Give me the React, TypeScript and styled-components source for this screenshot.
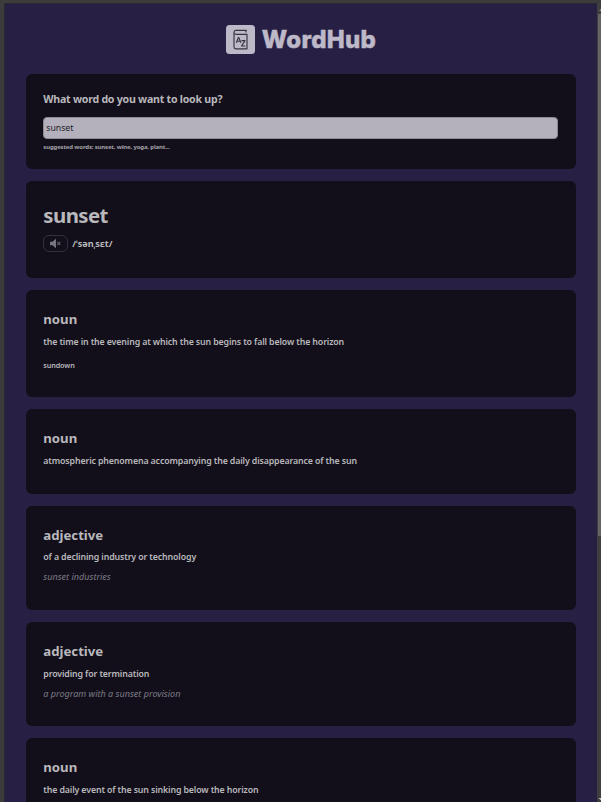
import React from "react";
import styled, { createGlobalStyle } from "styled-components";

const GlobalStyle = createGlobalStyle`
  * { box-sizing: border-box; }
  html, body { margin: 0; padding: 0; background: #3c3c3c; overflow: hidden; }
  body { font-family: "Noto Sans", "Open Sans", sans-serif; color: #b9b8bc; }
  h1, h2, p { margin: 0; }
`;

const Window = styled.div`
  display: grid;
  grid-template-columns: 1fr 4px;
  width: 601px;
  height: 802px;
  padding: 3px 0 0 4px;
  overflow: hidden;
  background: #3c3c3c;
`;

const Page = styled.main`
  display: flex;
  flex-direction: column;
  gap: 12px;
  height: 799px;
  padding: 0 21px 0 21px;
  border-left: 1px solid #2b2834;
  border-top: 1px solid #2b2834;
  overflow: hidden;
  background: #281f44;
`;

const ScrollTrack = styled.div`
  display: flex;
  flex-direction: column;
  align-items: flex-end;
  height: 799px;
  background: #3f3f3f;
`;

const ScrollArrow = styled.svg`
  display: block;
  width: 4px;
  height: 11px;
`;

const ScrollThumb = styled.div`
  width: 3px;
  height: 522px;
  background: #646464;
`;

const ScrollSpace = styled.div`
  flex: 1;
`;

const Brand = styled.header`
  display: flex;
  justify-content: center;
  align-items: center;
  gap: 7px;
  flex: none;
  height: 58.3px;
  padding-top: 12px;
`;

const BrandIcon = styled.svg`
  display: block;
  width: 29px;
  height: 29px;
`;

const BrandName = styled.span`
  font: 800 24px/29px "Inter", sans-serif;
  letter-spacing: 0.3px;
  -webkit-text-stroke: 0.5px #bdb9c8;
  color: #bdb9c8;
`;

const Card = styled.section<{ $height: number }>`
  flex: none;
  height: ${(p) => p.$height}px;
  padding: 17.4px 17.3px;
  border-radius: 6px;
  background: #120f1a;
`;

const Question = styled.h2`
  margin: -1px 0 10.2px;
  font-size: 10.6px;
  line-height: 16px;
  font-weight: 700;
  letter-spacing: -0.24px;
`;

const SearchInput = styled.input`
  display: block;
  width: 515px;
  height: 22px;
  padding: 0 2px;
  border: 1px solid #8d8a94;
  border-radius: 4px;
  outline: none;
  background: #b4b0bc;
  color: #211e29;
  font: 400 8.7px "Noto Sans", sans-serif;
`;

const Hint = styled.p`
  margin-top: 3px;
  font-size: 6px;
  line-height: 11px;
  font-weight: 700;
  letter-spacing: -0.16px;
  color: #a3a1a7;
`;

const Headword = styled.h1`
  margin: 1px 0 4px;
  font-size: 20.4px;
  line-height: 32px;
  font-weight: 700;
  letter-spacing: -0.58px;
`;

const Pronunciation = styled.div`
  display: flex;
  align-items: center;
  gap: 4.5px;
`;

const AudioButton = styled.button`
  display: flex;
  align-items: center;
  justify-content: center;
  width: 24.5px;
  height: 17px;
  padding: 0;
  border: 1px solid #33313b;
  border-radius: 6px;
  background: transparent;
`;

const Phonetic = styled.span`
  font-size: 9.1px;
  line-height: 16px;
  font-weight: 700;
`;

const PartOfSpeech = styled.h2`
  margin-top: 0.7px;
  font-size: 13.2px;
  line-height: 22px;
  font-weight: 700;
`;

const Definition = styled.p`
  margin-top: 1.3px;
  font-size: 8.8px;
  line-height: 20px;
  font-weight: 600;
  letter-spacing: -0.13px;
`;

const Example = styled.p`
  font-size: 9.05px;
  line-height: 20px;
  font-style: italic;
  color: #7d7b85;
`;

const Synonym = styled.p`
  margin-top: 3px;
  font-size: 7.2px;
  line-height: 20px;
  font-weight: 600;
  letter-spacing: -0.1px;
`;

interface Entry {
  part: string;
  definition: string;
  example?: string;
  synonym?: string;
  height: number;
}

const entries: Entry[] = [
  {
    part: "noun",
    definition: "the time in the evening at which the sun begins to fall below the horizon",
    synonym: "sundown",
    height: 107,
  },
  {
    part: "noun",
    definition: "atmospheric phenomena accompanying the daily disappearance of the sun",
    height: 84.5,
  },
  {
    part: "adjective",
    definition: "of a declining industry or technology",
    example: "sunset industries",
    height: 104.5,
  },
  {
    part: "adjective",
    definition: "providing for termination",
    example: "a program with a sunset provision",
    height: 104,
  },
  {
    part: "noun",
    definition: "the daily event of the sun sinking below the horizon",
    height: 84.5,
  },
];

function DictionaryLogo() {
  return (
    <BrandIcon viewBox="0 0 29 29">
      <rect width="29" height="29" rx="3.5" fill="#bdb9c8" />
      <g fill="none" stroke="#37343e" strokeWidth="1.15" strokeLinejoin="round">
        <path d="M20.8 5.3H9.8Q8 5.4 8 7.3V22Q8 23.8 9.8 23.8H21V9.3H9.8Q8 9.2 8 7.3M19.9 5.5V7.6" />
        <path d="M10.4 17.8L12.3 12.6H12.9L14.8 17.8M11.1 16.2H14.1M15.4 15.6H19L15.5 21H19.4" />
      </g>
    </BrandIcon>
  );
}

function MutedSpeaker() {
  return (
    <svg width="13" height="11" viewBox="0 0 13 11">
      <path d="M1 3.7H3.4L7 0.8V10.2L3.4 7.3H1Z" fill="#77757d" />
      <path d="M8.3 4L11.3 7M11.3 4L8.3 7" stroke="#5d5b64" strokeWidth="1.1" />
    </svg>
  );
}

export default function App() {
  return (
    <>
      <GlobalStyle />
      <Window>
        <Page>
          <Brand>
            <DictionaryLogo />
            <BrandName>WordHub</BrandName>
          </Brand>
          <Card $height={94.5}>
            <Question>What word do you want to look up?</Question>
            <SearchInput defaultValue="sunset" aria-label="Word" />
            <Hint>suggested words: sunset, wine, yoga, plant...</Hint>
          </Card>
          <Card $height={97.5}>
            <Headword>sunset</Headword>
            <Pronunciation>
              <AudioButton aria-label="Play pronunciation">
                <MutedSpeaker />
              </AudioButton>
              <Phonetic>/ˈsənˌsɛt/</Phonetic>
            </Pronunciation>
          </Card>
          {entries.map((entry) => (
            <Card key={entry.definition} $height={entry.height}>
              <PartOfSpeech>{entry.part}</PartOfSpeech>
              <Definition>{entry.definition}</Definition>
              {entry.example && <Example>{entry.example}</Example>}
              {entry.synonym && <Synonym>{entry.synonym}</Synonym>}
            </Card>
          ))}
        </Page>
        <ScrollTrack>
          <ScrollArrow viewBox="0 0 4 11">
            <path d="M2 8L4 5.5V8Z" fill="#8a8a8a" />
          </ScrollArrow>
          <ScrollThumb />
          <ScrollSpace />
          <ScrollArrow viewBox="0 0 4 11">
            <path d="M1.5 7H4V9.5Z" fill="#c8c8c8" />
          </ScrollArrow>
        </ScrollTrack>
      </Window>
    </>
  );
}
